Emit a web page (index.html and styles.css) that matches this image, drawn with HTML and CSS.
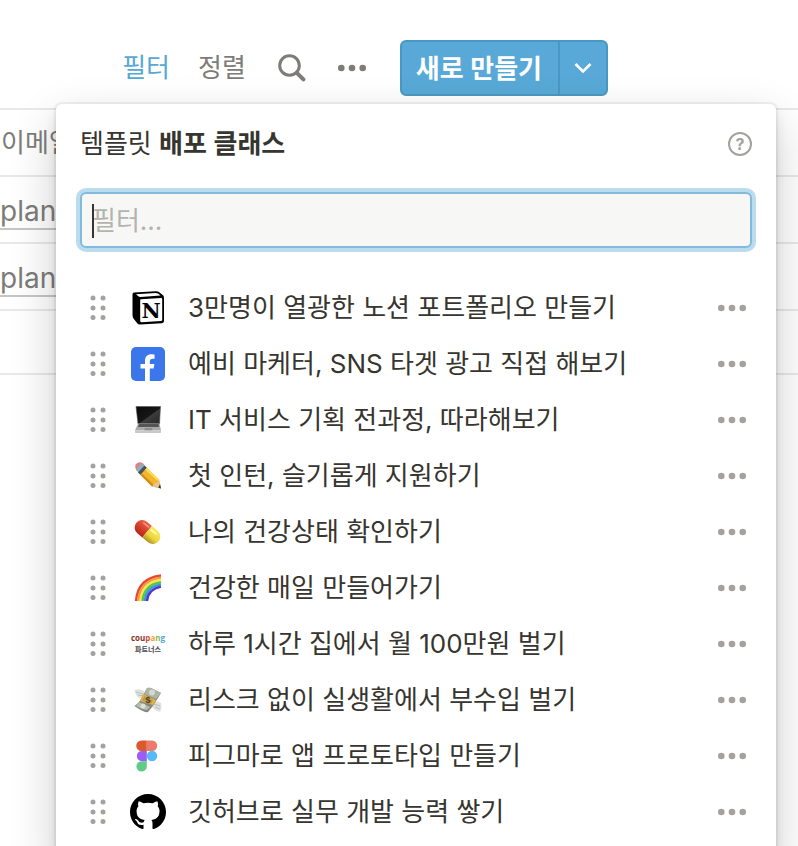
FILE: index.html
```html
<!DOCTYPE html>
<html lang="ko">
<head>
<meta charset="utf-8">
<meta name="viewport" content="width=device-width, initial-scale=1">
<title>템플릿 배포 클래스</title>
<link rel="stylesheet" href="styles.css">
</head>
<body>
<svg class="defs" aria-hidden="true">
  <symbol id="grip" viewBox="0 0 16 26"><g fill="#a3a29e"><circle cx="3" cy="3" r="2.5"/><circle cx="13" cy="3" r="2.5"/><circle cx="3" cy="13" r="2.5"/><circle cx="13" cy="13" r="2.5"/><circle cx="3" cy="22.500" r="2.5"/><circle cx="13" cy="22.500" r="2.5"/></g></symbol>
  <symbol id="dots" viewBox="0 0 28 8"><g fill="currentColor"><circle cx="3.300" cy="4" r="3.300"/><circle cx="14" cy="4" r="3.300"/><circle cx="24.700" cy="4" r="3.300"/></g></symbol>
</svg>
<div class="page">
  <header class="toolbar">
    <div class="views">
      <button class="link active" type="button">필터</button>
      <button class="link" type="button">정렬</button>
    </div>
    <button class="link" type="button" aria-label="검색"><svg width="28" height="28" viewBox="0 0 28 28" fill="none" stroke="currentColor"><circle cx="11.500" cy="11.500" r="9.800" stroke-width="3"/><path d="M18.800 18.800L25.400 25.400" stroke-width="4" stroke-linecap="round"/></svg></button>
    <button class="link" type="button" aria-label="더 보기"><svg width="28" height="8"><use href="#dots"/></svg></button>
    <div class="create">
      <button class="create-main" type="button">새로 만들기</button>
      <button class="create-more" type="button" aria-label="템플릿 열기"><svg width="18" height="12" viewBox="0 0 18 12" fill="none" stroke="#fff" stroke-width="2.600"><path d="M1.500 2L9 9.500L16.500 2"/></svg></button>
    </div>
  </header>

  <table class="data">
    <tr><th>이메일</th></tr>
    <tr><td><a href="#">plan</a></td></tr>
    <tr><td><a href="#">plan</a></td></tr>
    <tr><td></td></tr>
  </table>

  <section class="popup">
    <div class="popup-head">
      <label for="filter">템플릿 <b>배포 클래스</b></label>
      <button class="help" type="button" aria-label="도움말"><svg width="24" height="26" viewBox="1 0 24 26"><circle cx="13" cy="13" r="11" fill="none" stroke="#a3a29e" stroke-width="2"/><text x="13" y="19" text-anchor="middle">?</text></svg></button>
    </div>
    <div class="field">
      <input id="filter" type="text" placeholder="필터...">
      <span class="caret"></span>
    </div>
    <ul class="list">
      <li>
        <svg class="grip"><use href="#grip"/></svg>
        <svg class="icon" viewBox="0 0 36 36"><path d="M4 2.500L26 1.200Q28 1.200 29 2L33 5.200Q34 6 34 8V31Q34 33 32 33.200L10 34.500Q8 34.500 7 33L3.500 28.500Q2.500 27 2.500 25V4.500Q2.500 2.500 4 2.500Z" fill="#000"/><path d="M6 4.200L25.500 3Q27 3 28 3.600L30.500 5.600L10.500 6.900Q9 6.900 8 6Z" fill="#fff"/><path d="M11 9.300L31 8.100Q32.200 8.100 32.200 9.300V30Q32.200 31 31 31.100L11.500 32.300Q10.200 32.300 10.200 31V10.300Q10.200 9.300 11 9.300Z" fill="#fff"/><text class="cube-letter" x="21" y="28" text-anchor="middle">N</text></svg>
        <span class="name">3만명이 열광한 노션 포트폴리오 만들기</span>
        <button class="more" type="button" aria-label="더 보기"><svg width="28" height="8"><use href="#dots"/></svg></button>
      </li>
      <li>
        <svg class="grip"><use href="#grip"/></svg>
        <svg class="icon" viewBox="0 0 36 36"><rect x="1" y="1" width="34" height="34" rx="5" fill="#3b76ea"/><path d="M15 35V22.500H10.500V18H15V15C15 10.500 17.500 8.300 21.500 8.300Q23.300 8.300 24.500 8.600V12.700H22.200Q19.800 12.700 19.800 15.200V18H24.400L23.600 22.500H19.800V35Z" fill="#fff"/></svg>
        <span class="name">예비 마케터, SNS 타겟 광고 직접 해보기</span>
        <button class="more" type="button" aria-label="더 보기"><svg width="28" height="8"><use href="#dots"/></svg></button>
      </li>
      <li>
        <svg class="grip"><use href="#grip"/></svg>
        <svg class="icon" viewBox="0 0 36 36"><defs><linearGradient id="screen" x1="0" y1="0" x2="1" y2="1"><stop offset="0" stop-color="#090909"/><stop offset=".54" stop-color="#171717"/><stop offset=".56" stop-color="#3c3c3c"/><stop offset="1" stop-color="#262626"/></linearGradient></defs><path d="M6 4.500H30.500L29.500 22H8Z" fill="url(#screen)" stroke="#555" stroke-width=".6"/><path d="M8 21.500H29.500L31 28.500H5Z" fill="#aaa"/><path d="M9 22H28.500L29 25H8Z" fill="#555"/><path d="M15 26H22L22.500 28.500H14Z" fill="#8c8c8c"/><path d="M5 28.500H31V30.500Q31 31 30 31H6Q5 31 5 30.500Z" fill="#c9c9c9"/></svg>
        <span class="name">IT 서비스 기획 전과정, 따라해보기</span>
        <button class="more" type="button" aria-label="더 보기"><svg width="28" height="8"><use href="#dots"/></svg></button>
      </li>
      <li>
        <svg class="grip"><use href="#grip"/></svg>
        <svg class="icon" viewBox="0 0 36 36"><path d="M6 6Q9 3 12.500 5L14.500 7L8 13.500L6 11.500Q4.500 8 6 6Z" fill="#df8087"/><path d="M12.500 5.500L16 9L9.500 15.500L6 12Q8 7 12.500 5.500Z" fill="#9aabb5"/><path d="M14.500 7.500L17 10L10.500 17L8 14.500Z" fill="#46535b"/><path d="M17 10L29 21.500L31 30.500L22 28.500L10.500 17Z" fill="#f1b629"/><path d="M17 10L29 21.500L27.500 23L15 11.500Z" fill="#fbdc59"/><path d="M12 15.500L24 27L22 28.500L10.500 17Z" fill="#d28c19"/><path d="M22 28.500L24.500 25L27 24.500L29 21.500L31 30.500Z" fill="#e9c48f"/><path d="M28.300 29.800L30 26L31 30.500Z" fill="#30343a"/></svg>
        <span class="name">첫 인턴, 슬기롭게 지원하기</span>
        <button class="more" type="button" aria-label="더 보기"><svg width="28" height="8"><use href="#dots"/></svg></button>
      </li>
      <li>
        <svg class="grip"><use href="#grip"/></svg>
        <svg class="icon" viewBox="0 0 36 36"><defs><linearGradient id="red" x1="0" y1="0" x2="0" y2="1"><stop offset="0" stop-color="#ef6347"/><stop offset="1" stop-color="#b92319"/></linearGradient><linearGradient id="yellow" x1="0" y1="0" x2="0" y2="1"><stop offset="0" stop-color="#f8eb62"/><stop offset=".6" stop-color="#eed33f"/><stop offset="1" stop-color="#aa9425"/></linearGradient></defs><g transform="rotate(40 17.500 18)"><path d="M17 10.500H10.500A7.500 7.500 0 0 0 10.500 25.500H17Z" fill="url(#red)"/><path d="M17 10.500H24.500A7.500 7.500 0 0 1 24.500 25.500H17Z" fill="url(#yellow)"/><path d="M9 13.500H15" stroke="#f59b83" stroke-width="1.500" stroke-linecap="round"/><path d="M19 14H25" stroke="#fff9a8" stroke-width="2" stroke-linecap="round"/></g></svg>
        <span class="name">나의 건강상태 확인하기</span>
        <button class="more" type="button" aria-label="더 보기"><svg width="28" height="8"><use href="#dots"/></svg></button>
      </li>
      <li>
        <svg class="grip"><use href="#grip"/></svg>
        <svg class="icon" viewBox="0 0 36 36" fill="none" stroke-width="2.400"><path d="M6 31Q8 8 31 5.500" stroke="#e84635"/><path d="M8.200 31Q10 10.500 31 7.800" stroke="#f59b3b"/><path d="M10.400 31Q12 12.500 31 10" stroke="#f8e555"/><path d="M12.600 31Q14 14.800 31 12.200" stroke="#55c747"/><path d="M14.800 31Q16 17 31 14.400" stroke="#349bd7"/><path d="M17 31Q18 19 31 16.600" stroke="#5735cd"/></svg>
        <span class="name">건강한 매일 만들어가기</span>
        <button class="more" type="button" aria-label="더 보기"><svg width="28" height="8"><use href="#dots"/></svg></button>
      </li>
      <li>
        <svg class="grip"><use href="#grip"/></svg>
        <svg class="icon" viewBox="0 0 36 36"><text class="brand" x="18" y="15" text-anchor="middle"><tspan fill="#87352b">cou</tspan><tspan fill="#df4a36">p</tspan><tspan fill="#efa43a">a</tspan><tspan fill="#8bb94a">n</tspan><tspan fill="#4ba9d2">g</tspan></text><text class="brand-sub" x="18" y="26" text-anchor="middle">파트너스</text></svg>
        <span class="name">하루 1시간 집에서 월 100만원 벌기</span>
        <button class="more" type="button" aria-label="더 보기"><svg width="28" height="8"><use href="#dots"/></svg></button>
      </li>
      <li>
        <svg class="grip"><use href="#grip"/></svg>
        <svg class="icon" viewBox="0 0 36 36"><path d="M4.500 8Q10 6 14 9L15 15L9 16Q5 13 4.500 8Z" fill="#dfe2dc"/><path d="M6 10L13 12M8 13L13 14" stroke="#b9bfb8"/><path d="M21 21Q27 18 31 21Q32 27 30 30L25 28Q22 26 21 21Z" fill="#dfe2dc"/><path d="M24 22L30 24M25 25L30 27" stroke="#b9bfb8"/><path d="M17 6Q20 5 23 7L31 11Q28 16 26 19Q22 26 18 30Q14 31 4.500 24Q10 20 12 15Z" fill="#85897e"/><path d="M17 6Q20 5 23 7L31 11L26 17L14 12Z" fill="#aeb3a7"/><circle cx="22" cy="10.500" r="3" fill="#d5d8ce"/><path d="M9 20L20 25L17 28Q13 28 6 24Z" fill="#b7bbb0"/><circle cx="13" cy="24" r="2.500" fill="#dde0d7"/><path d="M13 12L26 18L23 23L10 19Z" fill="#e3b04b"/><path d="M14.500 14L23 18L21 22L12 18.500Z" fill="#c29a4c"/><text class="coin" x="18" y="21" text-anchor="middle">$</text></svg>
        <span class="name">리스크 없이 실생활에서 부수입 벌기</span>
        <button class="more" type="button" aria-label="더 보기"><svg width="28" height="8"><use href="#dots"/></svg></button>
      </li>
      <li>
        <svg class="grip"><use href="#grip"/></svg>
        <svg class="icon" viewBox="0 0 36 36"><path d="M16.800 2.500H11.400A5.200 5.200 0 0 0 11.400 12.900H16.800Z" fill="#dc5930"/><path d="M16.800 2.500H22A5.200 5.200 0 0 1 22 12.900H16.800Z" fill="#ed7b6c"/><path d="M16.800 12.900H11.400A5.200 5.200 0 0 0 11.400 23.200H16.800Z" fill="#9b5df5"/><circle cx="22" cy="18" r="5.200" fill="#57b9f8"/><path d="M16.800 23.200H11.400A5.200 5.200 0 1 0 16.800 28.400Z" fill="#5fcb87"/></svg>
        <span class="name">피그마로 앱 프로토타입 만들기</span>
        <button class="more" type="button" aria-label="더 보기"><svg width="28" height="8"><use href="#dots"/></svg></button>
      </li>
      <li>
        <svg class="grip"><use href="#grip"/></svg>
        <svg class="icon" viewBox="0 0 16 16"><path fill="#000" d="M8 0C3.580 0 0 3.580 0 8c0 3.540 2.290 6.530 5.470 7.590.4.070.55-.17.55-.38 0-.19-.01-.82-.01-1.490-2.010.37-2.530-.49-2.690-.94-.09-.23-.48-.94-.82-1.130-.28-.15-.68-.52-.01-.53.63-.01 1.080.58 1.230.82.72 1.210 1.870.87 2.330.66.07-.52.28-.87.51-1.070-1.780-.2-3.640-.89-3.640-3.950 0-.87.31-1.590.82-2.150-.08-.2-.36-1.020.08-2.120 0 0 .67-.21 2.200.82.64-.18 1.320-.27 2-.27s1.360.09 2 .27c1.530-1.040 2.200-.82 2.200-.82.44 1.100.16 1.920.08 2.120.51.56.82 1.270.82 2.150 0 3.070-1.870 3.750-3.650 3.950.29.25.54.73.54 1.480 0 1.070-.01 1.930-.01 2.200 0 .21.15.46.55.38A8.010 8.010 0 0 0 16 8c0-4.420-3.580-8-8-8z"/></svg>
        <span class="name">깃허브로 실무 개발 능력 쌓기</span>
        <button class="more" type="button" aria-label="더 보기"><svg width="28" height="8"><use href="#dots"/></svg></button>
      </li>
    </ul>
  </section>
</div>
</body>
</html>
```
FILE: styles.css
```css
* { box-sizing: border-box; }

body {
  margin: 0;
  background: #fff;
  color: #37352f;
  font: 26px/36px Inter, "Noto Sans CJK KR", sans-serif;
}

button {
  padding: 0;
  border: 0;
  background: none;
  color: inherit;
  font: inherit;
}

svg { display: block; }

.defs {
  position: absolute;
  width: 0;
  height: 0;
}

.page {
  position: relative;
  height: 100vh;
  overflow: hidden;
}

.toolbar {
  display: flex;
  align-items: center;
  justify-content: flex-end;
  gap: 32px;
  padding: 40px 190px 12px 0;
}

.views {
  display: flex;
  gap: 28px;
}

.link { color: #7d7c78; }
.link.active { color: #56a8d8; }

.create {
  display: flex;
  height: 56px;
  margin-left: 2px;
  border: 2px solid #4b97c4;
  border-radius: 6px;
  background: #58a9d7;
  color: #fff;
  font-weight: 600;
}

.create-main { padding: 2px 16px 0 14px; }

.create-more {
  display: flex;
  align-items: center;
  justify-content: center;
  width: 48px;
  border-left: 2px solid #4b97c4;
}

.data {
  width: 100%;
  border-collapse: collapse;
  border-top: 2px solid #e9e9e8;
  color: #7d7c78;
}

.data th,
.data td {
  height: 67px;
  padding: 0 1px;
  border-bottom: 2px solid #e9e9e8;
  font-weight: 400;
  text-align: left;
}

.data tr:last-child td { height: 64px; }

.data td { padding: 4px 0 0; }

.data a {
  display: inline-block;
  border-bottom: 2px solid #c6c6c4;
  color: inherit;
  font-size: 28px;
  line-height: 34px;
  text-decoration: none;
}

.popup {
  position: absolute;
  top: 104px;
  right: 22px;
  left: 56px;
  padding: 24px;
  border-radius: 6px;
  background: #fff;
  box-shadow: 0 0 0 2px rgba(15, 15, 15, .05), 0 6px 12px rgba(15, 15, 15, .1), 0 18px 48px rgba(15, 15, 15, .2);
}

.popup-head {
  display: flex;
  align-items: center;
  justify-content: space-between;
  height: 32px;
  margin-bottom: 32px;
}

.popup-head b { font-weight: 600; }

.help text {
  fill: #a3a29e;
  font-size: 16px;
  font-weight: 700;
}

.field { position: relative; }

.field input {
  display: block;
  width: 100%;
  height: 56px;
  padding: 0 10px;
  border: 2px solid #83bbdf;
  border-radius: 6px;
  outline: 0;
  background: #f7f7f5;
  box-shadow: 0 0 0 4px #bbdcef;
  color: inherit;
  font: inherit;
}

.field input::placeholder { color: #b4b3b0; }

.caret {
  position: absolute;
  top: 12px;
  left: 12px;
  width: 2px;
  height: 34px;
  background: #37352f;
}

.list {
  margin: 32px 0 0;
  padding: 0;
  list-style: none;
}

.list li {
  display: flex;
  align-items: center;
  height: 56px;
  padding: 0 6px 0 10px;
}

.grip {
  width: 16px;
  height: 26px;
  margin-right: 24px;
}

.icon {
  width: 36px;
  height: 36px;
  margin-right: 22px;
}

.name {
  flex: 1;
  white-space: nowrap;
}

.more { color: #a3a29e; }

.cube-letter {
  font: bold 21px "DejaVu Serif", serif;
}

.brand {
  font: 700 8px "Open Sans", sans-serif;
}

.brand-sub {
  fill: #444;
  font: bold 7px "Noto Sans CJK KR", sans-serif;
}

.coin {
  fill: #4c4027;
  font: bold 9px "Liberation Sans", sans-serif;
}
```
